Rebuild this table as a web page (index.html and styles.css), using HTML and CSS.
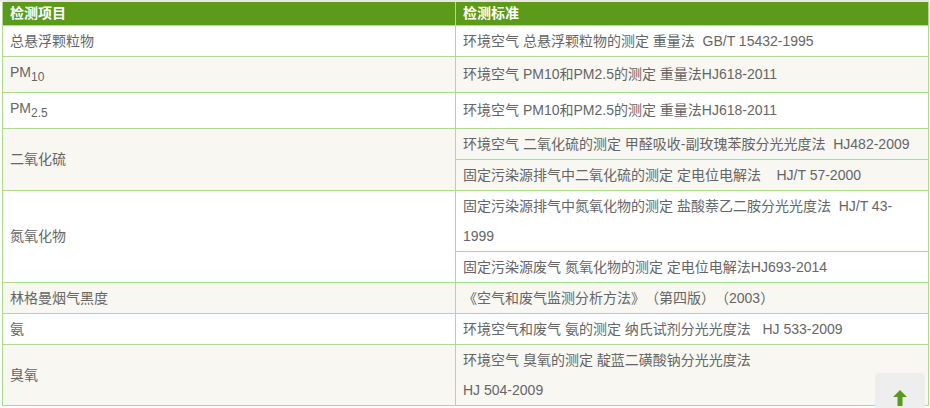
FILE: index.html
```html
<!DOCTYPE html>
<html lang="zh-CN">
<head>
<meta charset="utf-8">
<title>检测项目</title>
<link rel="stylesheet" href="styles.css">
</head>
<body>
<div class="topline"></div>
<table class="std">
  <colgroup><col class="c1"><col class="c2"></colgroup>
  <thead>
    <tr class="head"><th>检测项目</th><th>检测标准</th></tr>
  </thead>
  <tbody>
    <tr class="w"><td>总悬浮颗粒物</td><td>环境空气 总悬浮颗粒物的测定 重量法&nbsp; GB/T 15432-1995</td></tr>
    <tr class="b"><td>PM<sub>10</sub></td><td>环境空气 PM10和PM2.5的测定 重量法HJ618-2011</td></tr>
    <tr class="w"><td>PM<sub>2.5</sub></td><td>环境空气 PM10和PM2.5的测定 重量法HJ618-2011</td></tr>
    <tr class="b"><td rowspan="2">二氧化硫</td><td>环境空气 二氧化硫的测定 甲醛吸收-副玫瑰苯胺分光光度法&nbsp; HJ482-2009</td></tr>
    <tr class="b"><td>固定污染源排气中二氧化硫的测定 定电位电解法&nbsp;&nbsp;&nbsp; HJ/T 57-2000</td></tr>
    <tr class="w"><td rowspan="2">氮氧化物</td><td>固定污染源排气中氮氧化物的测定 盐酸萘乙二胺分光光度法&nbsp; HJ/T 43-1999</td></tr>
    <tr class="w"><td>固定污染源废气 氮氧化物的测定 定电位电解法HJ693-2014</td></tr>
    <tr class="b"><td>林格曼烟气黑度</td><td>《空气和废气监测分析方法》（第四版）（2003）</td></tr>
    <tr class="w"><td>氨</td><td>环境空气和废气 氨的测定 纳氏试剂分光光度法&nbsp;&nbsp; HJ 533-2009</td></tr>
    <tr class="b"><td>臭氧</td><td>环境空气 臭氧的测定 靛蓝二磺酸钠分光光度法<br>HJ 504-2009</td></tr>
  </tbody>
</table>
<a class="totop" href="#" aria-label="返回顶部">
  <svg width="14" height="16" viewBox="0 0 14 16"><path d="M7 0 L14 7 L9.5 7 L9.5 16 L4.5 16 L4.5 7 L0 7 Z" fill="#5a9a1a"/></svg>
</a>
</body>
</html>
```

FILE: styles.css
```css
html, body {
  margin: 0;
  padding: 0;
  background: #fff;
}
body {
  font-family: "Liberation Sans", "Noto Sans CJK SC", sans-serif;
  font-size: 14px;
  color: #666;
  overflow: hidden;
  text-spacing-trim: space-all;
}
.topline {
  height: 2px;
  background: #e8e8e8;
}
.std {
  margin-left: 2px;
  width: 926px;
  border-collapse: collapse;
  table-layout: fixed;
}
.c1 { width: 453px; }
.c2 { width: 473px; }
.std th,
.std td {
  border: 1px solid #acdd8f;
  padding: 0 7px;
  text-align: left;
  vertical-align: middle;
  line-height: 30px;
}
.std th {
  background: #5b9a1b;
  color: #fff;
  font-weight: bold;
  line-height: 23px;
  border-top: none;
}
.w td { background: #fff; }
.b td { background: #f8f7f2; }
.std sub {
  font-size: 12px;
}
.totop {
  position: fixed;
  left: 875px;
  top: 373px;
  width: 50px;
  height: 50px;
  background: #eeeeee;
  border-radius: 4px;
  display: flex;
  align-items: center;
  justify-content: center;
}
```
